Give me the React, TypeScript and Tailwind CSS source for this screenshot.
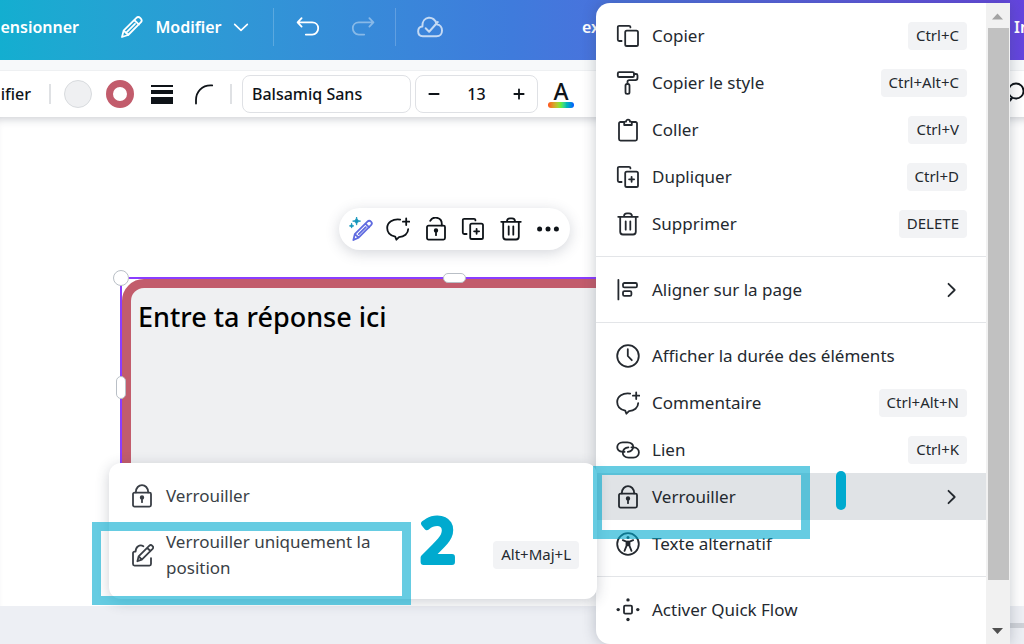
import React from 'react';

interface IconProps {
  className?: string;
  children: React.ReactNode;
}

const Icon: React.FC<IconProps> = ({ className = 'w-6 h-6', children }) => (
  <svg
    viewBox="0 0 24 24"
    fill="none"
    stroke="currentColor"
    strokeWidth="1.8"
    strokeLinecap="round"
    strokeLinejoin="round"
    className={`shrink-0 ${className}`}
    aria-hidden="true"
  >
    {children}
  </svg>
);

const CopyIcon = () => (
  <Icon>
    <path d="M14.4 3.400V3.200c0-.8-.6-1.400-1.400-1.400H3.200c-.8 0-1.400.6-1.400 1.400v12.400c0 .8.6 1.400 1.400 1.400h2.400" />
    <rect x="9.200" y="6.600" width="12.800" height="15.400" rx="1.600" />
  </Icon>
);

const RollerIcon = () => (
  <Icon>
    <rect x="1.800" y="1.200" width="16.200" height="4.800" rx="1.300" />
    <path d="M18 3h2c.9 0 1.500.6 1.500 1.500v2.600c0 1.200-.8 2-2 2h-6.300c-1 0-1.700.7-1.700 1.700v1.800" />
    <rect x="9.500" y="13" width="4" height="9.800" rx="1.600" />
  </Icon>
);

const ClipboardIcon = () => (
  <Icon>
    <path d="M7.800 4H4.500C3.700 4 3 4.700 3 5.500v15.600c0 .8.7 1.500 1.500 1.500h15c.8 0 1.500-.7 1.500-1.500V5.500c0-.8-.7-1.500-1.500-1.500h-3.300" />
    <path d="M8.200 7V4.600c0-.6.4-.9.9-.9h.9a2 2 0 0 1 4 0h.9c.5 0 .9.3.9.9V7z" />
  </Icon>
);

const DuplicateIcon = () => (
  <Icon>
    <path d="M14.400 3.400V3.200c0-.8-.6-1.400-1.400-1.400H3.200c-.8 0-1.400.6-1.400 1.400v12.400c0 .8.6 1.400 1.400 1.400h2.400" />
    <rect x="9.200" y="6.600" width="12.800" height="15.400" rx="1.600" />
    <path d="M15.600 11.800v5M13.100 14.300h5" />
  </Icon>
);

const TrashIcon = () => (
  <Icon>
    <path d="M2.200 4.800h19.600M4.200 4.800v15c0 1.500 1.200 2.700 2.700 2.700h10.200c1.500 0 2.700-1.200 2.700-2.700v-15M8 4.500c0-2 1.200-3.200 3-3.200h2c1.800 0 3 1.200 3 3.200M9.700 9.300v8.400M14.300 9.300v8.400" />
  </Icon>
);

const AlignIcon = () => (
  <Icon>
    <path d="M2.400 1.800v19.600" />
    <rect x="7" y="5" width="14" height="4.400" rx="1.400" />
    <rect x="7" y="13.200" width="8.400" height="4.600" rx="1.400" />
  </Icon>
);

const ClockIcon = () => (
  <Icon>
    <circle cx="12" cy="12" r="10.800" />
    <path d="M11.800 5.200V12l4 4.200" />
  </Icon>
);

const CommentIcon = () => (
  <Icon>
    <path d="M14.200 2.600C6.800 1.600 1.200 5.200 1.200 11c0 4.600 3.400 7.700 8 8.700l1.200 3 2.600-2.600c5.200-.3 9.200-3.400 9.200-8" />
    <path d="M20.200 1.400v6.600M16.900 4.700h6.600" />
  </Icon>
);

const LinkIcon = () => (
  <Icon>
    <path d="M8.600 13.800H6.800c-7.600-.4-7.200-9.200 0-9.400h4.600c3.600 0 6 2 5.800 4.700-.3 2.700-2.500 4.400-5.400 4.700" />
    <path d="M15.400 9.300h2.200c7.200.4 7 9.900-.2 10.300h-4.800c-3.600 0-6-2.200-5.800-5 .3-2.900 2.600-4.900 5.600-5.200" />
  </Icon>
);

const LockIcon: React.FC<{ open?: boolean }> = ({ open }) => (
  <Icon>
    <rect x="3" y="8.600" width="18" height="14" rx="1.500" />
    {open ? (
      <path d="M6.200 3.800c2.600-5 11.600-4 11.600 3v1.600" />
    ) : (
      <path d="M5.800 8.400c0-9.600 12.400-9.600 12.400 0" />
    )}
    <circle cx="12" cy="13.400" r="1.300" fill="currentColor" />
    <path d="M12 14v4.200" />
  </Icon>
);

const LockPencilIcon = () => (
  <Icon>
    <path d="M13.400 3.200C9.800 1 5.600 3.600 5.600 8.600H4.500c-.9 0-1.500.6-1.500 1.500v11c0 .9.6 1.500 1.500 1.500h15c.9 0 1.500-.6 1.500-1.500v-6" />
    <path d="M7.400 18.200l1.200-4.800L19.400 2.600c1.800-1.800 5 1.200 3.200 3.200L11.800 16.700zM17.200 4.800l3.200 3.200M8.800 13.400l3 3.200" />
  </Icon>
);

const AccessibilityIcon = () => (
  <Icon>
    <circle cx="12" cy="12" r="10.800" />
    <circle cx="12" cy="5.600" r="1.500" fill="currentColor" stroke="none" />
    <path d="M6.800 8.200l3.600 1.400h3.200l3.600-1.400M10.500 9.800v4l-2 5M13.500 9.800v4l2 5M10.500 13.800l1.500-.8 1.500.8" />
    <path d="M12 10v3" strokeWidth="2.500" />
  </Icon>
);

const FlowIcon = () => (
  <Icon>
    <rect x="8" y="7.600" width="8" height="8" rx="1.200" />
    <g fill="currentColor" stroke="none">
      <circle cx="12" cy="1.900" r="1.700" />
      <circle cx="12" cy="21.500" r="1.700" />
      <circle cx="2.200" cy="11.600" r="1.700" />
      <circle cx="21.800" cy="11.600" r="1.700" />
    </g>
  </Icon>
);

const MagicPencilIcon = () => (
  <Icon>
    <g stroke="#5f6be0">
      <path d="M4.400 23l1.400-5.800L18.400 4.600c2.400-2.400 6 1 3.600 3.600L9.600 20.600zM16.400 6.600l3.800 3.800M6 17.200l3.600 3.400M9.800 17.200l7-7" />
    </g>
    <path
      d="M7.600 0c.5 2.900 1.200 3.600 4 4.100-2.800.5-3.500 1.200-4 4-.5-2.800-1.200-3.500-4-4 2.800-.5 3.500-1.200 4-4.100zM2.600 6.600c.3 1.500.8 2 2.200 2.300-1.400.3-1.900.8-2.200 2.200-.3-1.400-.8-1.900-2.200-2.200 1.400-.3 1.900-.8 2.200-2.300z"
      fill="#1495bb"
      stroke="#1495bb"
      strokeWidth=".8"
    />
  </Icon>
);

const ChevronRight = () => (
  <Icon className="w-6 h-6 ml-auto mr-1">
    <path d="M9.500 5.800L15.700 12l-6.200 6.200" />
  </Icon>
);

interface MenuItem {
  label: string;
  icon: React.ReactNode;
  keys?: string;
  submenu?: boolean;
  active?: boolean;
}

const sections: MenuItem[][] = [
  [
    { label: 'Copier', icon: <CopyIcon />, keys: 'Ctrl+C' },
    { label: 'Copier le style', icon: <RollerIcon />, keys: 'Ctrl+Alt+C' },
    { label: 'Coller', icon: <ClipboardIcon />, keys: 'Ctrl+V' },
    { label: 'Dupliquer', icon: <DuplicateIcon />, keys: 'Ctrl+D' },
    { label: 'Supprimer', icon: <TrashIcon />, keys: 'DELETE' },
  ],
  [{ label: 'Aligner sur la page', icon: <AlignIcon />, submenu: true }],
  [
    { label: 'Afficher la durée des éléments', icon: <ClockIcon /> },
    { label: 'Commentaire', icon: <CommentIcon />, keys: 'Ctrl+Alt+N' },
    { label: 'Lien', icon: <LinkIcon />, keys: 'Ctrl+K' },
    { label: 'Verrouiller', icon: <LockIcon />, submenu: true, active: true },
    { label: 'Texte alternatif', icon: <AccessibilityIcon /> },
  ],
  [{ label: 'Activer Quick Flow', icon: <FlowIcon /> }],
];

const Keys: React.FC<{ children: React.ReactNode }> = ({ children }) => (
  <kbd className="ml-auto shrink-0 h-7 px-2 flex items-center rounded bg-[#f2f3f5] text-[15px] text-[#24292f] font-['Noto_Sans',sans-serif]">
    {children}
  </kbd>
);

const Header = () => (
  <header className="h-[60px] pb-[6px] flex items-center overflow-hidden whitespace-nowrap bg-linear-to-r from-[#13aed0] via-[#3f7bdc] to-[#6445de] text-white font-semibold">
    <button className="w-[79px] text-right">ensionner</button>
    <button className="ml-[41px] flex items-center gap-[10px]">
      <Icon>
        <path d="M2 22l1.600-6.400L16.400 2.800c2.400-2.400 6.800 1.600 4.600 4.400L8.200 20zM14.200 5l4.800 4.600M3.800 15.600L8.200 20M7 16.800l8-8" />
      </Icon>
      <span className="w-[69px]">Modifier</span>
      <Icon className="w-4 h-4">
        <path d="M2.500 8l9.500 9 9.500-9" strokeWidth="2.400" />
      </Icon>
    </button>
    <span className="ml-6 w-px h-[38px] bg-white/20" />
    <button className="ml-[22px]" aria-label="Annuler">
      <Icon>
        <path d="M5.600 3.200L1.600 7.400l4 4.200M1.800 7.400h14.400c3.600 0 6 2.400 6 5.800s-2.400 6.400-6 6.400H9.800" />
      </Icon>
    </button>
    <button className="ml-[31px] opacity-40" aria-label="Rétablir">
      <Icon>
        <path d="M18.400 3.200l4 4.200-4 4.200M22.200 7.400H7.800c-3.600 0-6 2.400-6 5.800s2.400 6.400 6 6.400h5.400" />
      </Icon>
    </button>
    <span className="ml-5 w-px h-[38px] bg-white/20" />
    <button className="ml-[21px] opacity-70" aria-label="Enregistré">
      <Icon className="w-[26px] h-[26px]">
        <path d="M5.400 20.600C-.4 20.200-.2 12 5 11.600 4.200 1.600 16.600.8 18 9.400c6.800.6 6.800 11.200 0 11.200zM8 13.200l3.200 3.200 8-9" />
      </Icon>
    </button>
    <span className="ml-[139px]">ex</span>
    <span className="ml-auto w-[10px]">In</span>
  </header>
);

const Toolbar = () => (
  <div className="relative pt-[10px] bg-[#f7f9fa]">
    <div className="h-[47px] flex items-center whitespace-nowrap overflow-hidden bg-white border-t border-[#eef0f2] text-[#0e1318] font-medium">
      <button className="w-[31px] text-right">ifier</button>
      <span className="ml-[18px] w-0.5 h-5 bg-[#dfe1e4]" />
      <button className="ml-[13px] w-7 h-7 rounded-full border border-[#d8dbde] bg-[#eff0f2]" aria-label="Couleur de fond" />
      <button className="ml-[14px] w-7 h-7 rounded-full border-[7px] border-[#c25c6c] bg-white" aria-label="Couleur de bordure" />
      <button className="ml-[17px] w-[22px] flex flex-col gap-[3px]" aria-label="Épaisseur">
        <span className="w-full h-0.5 bg-[#0e1318]" />
        <span className="w-full h-1 bg-[#0e1318]" />
        <span className="w-full h-[7px] bg-[#0e1318]" />
      </button>
      <button className="ml-5" aria-label="Arrondi des angles">
        <Icon>
          <path d="M3 21.500v-3.500C3 9.500 9 3.400 17.600 3.400h1.600" />
        </Icon>
      </button>
      <span className="ml-[13px] w-0.5 h-5 bg-[#dfe1e4]" />
      <input
        aria-label="Police"
        defaultValue="Balsamiq Sans"
        className="ml-[10px] w-[169px] h-[38px] px-[9px] border border-[#dfe1e5] rounded-lg bg-white"
      />
      <div className="ml-1 w-[123px] h-[38px] flex items-center border border-[#dfe1e5] rounded-lg">
        <button className="w-9 shrink-0 flex justify-center" aria-label="Réduire">
          <Icon className="w-4 h-4"><path d="M5 12h14" strokeWidth="2.700" /></Icon>
        </button>
        <input aria-label="Taille" defaultValue="13" className="grow w-0 text-center" />
        <button className="w-9 shrink-0 flex justify-center" aria-label="Augmenter">
          <Icon className="w-4 h-4"><path d="M5 12h14M12 5v14" strokeWidth="2.700" /></Icon>
        </button>
      </div>
      <button className="ml-[10px] w-[26px] flex flex-col items-center" aria-label="Couleur du texte">
        <span className="text-[23px] leading-[22px]">A</span>
        <span className="w-full h-1.5 rounded-full bg-linear-to-r from-[#ff4a1c] via-[#5cf03c] to-[#1450ff]" />
      </button>
      <Icon className="w-6 h-6 ml-auto -mr-1">
        <circle cx="12" cy="9" r="7.500" />
        <path d="M0 17c4 1 7 0 8-1M2 21c3-1 5-3 6-5" />
      </Icon>
    </div>
  </div>
);

const FloatingBar = () => (
  <div className="absolute left-[339px] top-[91px] w-[231px] h-[42px] px-[10px] flex items-center justify-between rounded-full bg-white text-[#0e1318] shadow-[0_3px_14px_rgba(60,70,90,0.22)]">
    <button aria-label="Modification magique"><MagicPencilIcon /></button>
    <button aria-label="Commentaire"><CommentIcon /></button>
    <button aria-label="Verrouiller l'élément"><LockIcon open /></button>
    <button aria-label="Dupliquer l'élément"><DuplicateIcon /></button>
    <button aria-label="Supprimer l'élément"><TrashIcon /></button>
    <button aria-label="Plus">
      <Icon>
        <g fill="currentColor" stroke="none">
          <circle cx="3.600" cy="12" r="2.500" />
          <circle cx="12" cy="12" r="2.500" />
          <circle cx="20.400" cy="12" r="2.500" />
        </g>
      </Icon>
    </button>
  </div>
);

const Canvas = () => (
  <main className="relative grow bg-white overflow-hidden shadow-[inset_0_8px_8px_-6px_rgba(50,60,80,0.25)]">
    <div className="absolute left-[120px] right-[60px] top-[160px] bottom-5 border-2 border-[#8b3dff]">
      <div className="h-full border-[9px] border-[#c25c6c] rounded-[22px] bg-[#eff0f2] px-[7px] py-[13px]">
        <p className="text-[27px] leading-8 font-medium text-black">Entre ta réponse ici</p>
      </div>
      <span className="absolute -left-[9px] -top-[9px] w-4 h-4 rounded-full bg-white border border-[#b9bfc6]" />
      <span className="absolute left-[321px] -top-[6px] w-[23px] h-[10px] rounded-full bg-white border border-[#b9bfc6]" />
      <span className="absolute -left-[6px] top-[97px] w-[10px] h-[23px] rounded-full bg-white border border-[#b9bfc6]" />
    </div>
    <FloatingBar />
  </main>
);

const ContextMenu = () => (
  <div className="absolute right-[14px] top-[3px] bottom-0 w-[414px] flex overflow-hidden rounded-l-[14px] bg-white text-[17px] text-[#24292f] shadow-[0_0_14px_rgba(50,60,80,0.28)]">
    <div className="grow">
      {sections.map((items, index) => (
        <ul key={index} className={`py-[9px] ${index > 0 ? 'border-t border-[#e3e5e8]' : ''}`}>
          {items.map((item) => (
            <li key={item.label}>
              <button
                className={`w-full h-[47px] pl-5 pr-[19px] flex items-center gap-3 text-left ${
                  item.active ? 'bg-[#e0e3e6]' : ''
                }`}
              >
                {item.icon}
                <span>{item.label}</span>
                {item.keys && <Keys>{item.keys}</Keys>}
                {item.submenu && <ChevronRight />}
              </button>
            </li>
          ))}
        </ul>
      ))}
    </div>
    <div className="w-6 shrink-0 flex flex-col items-center bg-[#f1f1f1]">
      <svg viewBox="0 0 24 24" className="w-6 h-[25px] shrink-0" aria-hidden="true">
        <path d="M6 16l5.500-6 5.500 6z" fill="#a3a3a3" />
      </svg>
      <span className="w-[21px] grow bg-[#c1c1c1]" />
      <svg viewBox="0 0 24 24" className="mt-[38px] w-6 h-[26px] shrink-0" aria-hidden="true">
        <path d="M6 9l5.500 6 5.500-6z" fill="#505050" />
      </svg>
    </div>
  </div>
);

const LockMenu = () => (
  <div className="absolute right-[427px] top-[463px] w-[488px] py-[9px] rounded-xl bg-white text-[17px] text-[#3a3f46] shadow-[0_3px_14px_rgba(50,60,80,0.24)]">
    <button className="w-full h-[47px] pl-[21px] pr-[18px] flex items-center gap-3 text-left">
      <LockIcon />
      <span>Verrouiller</span>
    </button>
    <button className="w-full h-[71px] pl-[21px] pr-[18px] flex items-center gap-3 text-left">
      <LockPencilIcon />
      <span className="w-[220px] leading-[26px]">Verrouiller uniquement la position</span>
      <Keys>Alt+Maj+L</Keys>
    </button>
  </div>
);

const Annotations = () => (
  <div className="pointer-events-none">
    <div className="absolute right-[214px] top-[466px] w-[217px] h-[73px] border-[9px] border-[#00aacf]/60" />
    <div className="absolute right-[613px] top-[522px] w-[319px] h-[83px] border-[9px] border-[#00aacf]/60" />
    <span className="absolute right-[178px] top-[471px] w-[10px] h-[39px] rounded-full bg-[#00aacf]" role="img" aria-label="1" />
    <svg viewBox="0 0 48 64" className="absolute right-[562px] top-[509px] w-12 h-16">
      <text
        x="24"
        y="53"
        textAnchor="middle"
        fontSize="60"
        fill="#00aacf"
        stroke="#00aacf"
        strokeWidth="6"
        strokeLinejoin="round"
      >
        2
      </text>
    </svg>
  </div>
);

const App: React.FC = () => {
  return (
    <div className="relative min-h-screen flex flex-col overflow-hidden bg-[#edeff4] text-base font-['Noto_Sans',sans-serif]">
      <Header />
      <Toolbar />
      <Canvas />
      <footer className="h-[38px] flex flex-col justify-center">
        <span className="h-[5px] ml-auto w-4 bg-[#cfd2d8]" />
      </footer>
      <ContextMenu />
      <LockMenu />
      <Annotations />
    </div>
  );
};

export default App;
